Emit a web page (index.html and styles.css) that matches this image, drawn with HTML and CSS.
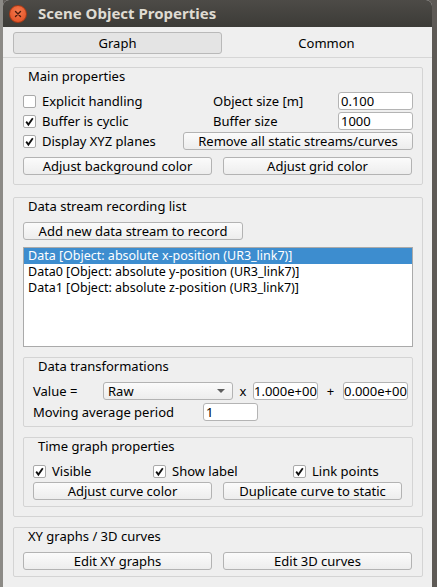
FILE: index.html
```html
<!DOCTYPE html>
<html>
<head>
<meta charset="utf-8">
<link rel="stylesheet" href="styles.css">
</head>
<body>
<div class="window">
  <div class="titlebar">
    <span class="close"><svg width="8" height="8" viewBox="0 0 8 8"><path d="M1.5 1.5L6.5 6.5M6.5 1.5L1.5 6.5" stroke="#4a1a0c" stroke-width="1.4" stroke-linecap="round"/></svg></span>
    <span class="title">Scene Object Properties</span>
  </div>
  <div class="tabs">
    <div class="tab active">Graph</div>
    <div class="tab">Common</div>
  </div>
  <div class="pane">
    <div class="group main">
      <div class="gtitle">Main properties</div>
      <div class="row">
        <label class="check w190"><span class="box"></span>Explicit handling</label>
        <span class="lbl w125">Object size [m]</span>
        <span class="input w75">0.100</span>
      </div>
      <div class="row gap2">
        <label class="check w190"><span class="box on"><svg width="11" height="11" viewBox="0 0 11 11"><path d="M2.2 5.6L4.4 8.6L8.8 2.2" fill="none" stroke="#111" stroke-width="1.8"/></svg></span>Buffer is cyclic</label>
        <span class="lbl w125">Buffer size</span>
        <span class="input w75">1000</span>
      </div>
      <div class="row gap2">
        <label class="check w160"><span class="box on"><svg width="11" height="11" viewBox="0 0 11 11"><path d="M2.2 5.6L4.4 8.6L8.8 2.2" fill="none" stroke="#111" stroke-width="1.8"/></svg></span>Display XYZ planes</label>
        <span class="btn w230">Remove all static streams/curves</span>
      </div>
      <div class="row gap7 pair">
        <span class="btn w189">Adjust background color</span>
        <span class="btn w189">Adjust grid color</span>
      </div>
    </div>

    <div class="group data">
      <div class="gtitle">Data stream recording list</div>
      <div class="row">
        <span class="btn w220">Add new data stream to record</span>
      </div>
      <div class="list">
        <div class="item sel">Data [Object: absolute x-position (UR3_link7)]</div>
        <div class="item">Data0 [Object: absolute y-position (UR3_link7)]</div>
        <div class="item">Data1 [Object: absolute z-position (UR3_link7)]</div>
      </div>

      <div class="group inner">
        <div class="gtitle">Data transformations</div>
        <div class="row">
          <span class="lbl w70">Value =</span>
          <span class="combo w130">Raw<span class="arrow"></span></span>
          <span class="op w20">x</span>
          <span class="input tight w65">1.000e+00</span>
          <span class="op w25">+</span>
          <span class="input tight w65">0.000e+00</span>
        </div>
        <div class="row gap3">
          <span class="lbl w170">Moving average period</span>
          <span class="input w55">1</span>
        </div>
      </div>

      <div class="group inner">
        <div class="gtitle">Time graph properties</div>
        <div class="row">
          <label class="check w120"><span class="box on"><svg width="11" height="11" viewBox="0 0 11 11"><path d="M2.2 5.6L4.4 8.6L8.8 2.2" fill="none" stroke="#111" stroke-width="1.8"/></svg></span>Visible</label>
          <label class="check w140"><span class="box on"><svg width="11" height="11" viewBox="0 0 11 11"><path d="M2.2 5.6L4.4 8.6L8.8 2.2" fill="none" stroke="#111" stroke-width="1.8"/></svg></span>Show label</label>
          <label class="check"><span class="box on"><svg width="11" height="11" viewBox="0 0 11 11"><path d="M2.2 5.6L4.4 8.6L8.8 2.2" fill="none" stroke="#111" stroke-width="1.8"/></svg></span>Link points</label>
        </div>
        <div class="row gap2 pair">
          <span class="btn w179">Adjust curve color</span>
          <span class="btn w179">Duplicate curve to static</span>
        </div>
      </div>
    </div>

    <div class="group xy">
      <div class="gtitle">XY graphs / 3D curves</div>
      <div class="row pair">
        <span class="btn w189">Edit XY graphs</span>
        <span class="btn w189">Edit 3D curves</span>
      </div>
    </div>
  </div>
</div>
</body>
</html>
```

FILE: styles.css
```css
* { box-sizing: border-box; }
html, body { margin: 0; height: 100%; }
body {
  background: linear-gradient(90deg, #8c8a86 0, #8c8a86 3px, #5e5a56 3px);
  font-family: "Noto Sans", "DejaVu Sans", sans-serif;
  font-size: 13px;
  color: #000;
  overflow: hidden;
}
.window {
  margin-left: 3px;
  width: 429px;
  height: 587px;
  background: #efefef;
  border-radius: 6px 6px 0 0;
  overflow: hidden;
}
.titlebar {
  height: 27px;
  background: linear-gradient(#4d4b47, #3c3b37);
  display: flex;
  align-items: center;
  padding-left: 6px;
  gap: 11px;
}
.close {
  width: 18px;
  height: 18px;
  border-radius: 50%;
  background: radial-gradient(circle at 50% 35%, #f57a4e, #de4a1e);
  border: 1px solid #a63a17;
  display: flex;
  align-items: center;
  justify-content: center;
}
.title {
  color: #dfdbd2;
  font-weight: bold;
  font-size: 15px;
  line-height: 27px;
}
.tabs {
  display: flex;
  margin: 5px 0 0 10px;
  height: 22px;
}
.tab {
  width: 209px;
  display: flex;
  align-items: center;
  justify-content: center;
}
.tab.active {
  background: #e4e4e4;
  border: 1px solid #b9b9b9;
  border-radius: 3px;
}
.pane {
  margin-top: 3px;
  border-top: 1px solid #d6d6d6;
  padding: 9px 9px 0 10px;
}
.group {
  border: 1px solid #d4d4d4;
  border-radius: 2px;
  padding: 0 9px 9px 9px;
}
.gtitle {
  height: 24px;
  line-height: 16px;
  padding-left: 5px;
}
.row {
  display: flex;
  align-items: center;
  height: 18px;
}
.row > * { flex: none; }
.gap2 { margin-top: 2px; }
.gap3 { margin-top: 3px; }
.gap7 { margin-top: 7px; }
.pair { gap: 11px; }
.check {
  display: flex;
  align-items: center;
  gap: 6px;
  white-space: nowrap;
}
.box {
  width: 13px;
  height: 13px;
  flex: none;
  background: #fff;
  border: 1px solid #a9a9a9;
  border-radius: 2px;
  display: flex;
  align-items: center;
  justify-content: center;
}
.lbl { white-space: nowrap; }
.input {
  height: 18px;
  background: #fff;
  border: 1px solid #b4b4b4;
  border-radius: 3px;
  padding-left: 2px;
  line-height: 16px;
  white-space: nowrap;
  overflow: hidden;
}
.input.tight { padding-left: 0; }
.btn {
  height: 18px;
  background: linear-gradient(#fbfbfb, #ededed);
  border: 1px solid #b3b3b3;
  border-radius: 3px;
  display: flex;
  align-items: center;
  justify-content: center;
  white-space: nowrap;
}
.combo {
  height: 18px;
  background: linear-gradient(#fbfbfb, #ededed);
  border: 1px solid #b3b3b3;
  border-radius: 3px;
  display: flex;
  align-items: center;
  justify-content: space-between;
  padding: 0 7px 0 4px;
}
.arrow {
  width: 0;
  height: 0;
  border-left: 4px solid transparent;
  border-right: 4px solid transparent;
  border-top: 4px solid #5e5e5e;
}
.op { text-align: center; }
.w20 { width: 20px; }
.w25 { width: 25px; }
.w55 { width: 55px; }
.w65 { width: 65px; }
.w70 { width: 70px; }
.w75 { width: 75px; }
.w120 { width: 120px; }
.w125 { width: 125px; }
.w130 { width: 130px; }
.w140 { width: 140px; }
.w160 { width: 160px; }
.w170 { width: 170px; }
.w179 { width: 179px; }
.w189 { width: 189px; }
.w190 { width: 190px; }
.w220 { width: 220px; }
.w230 { width: 230px; }
.main { width: 410px; }
.data { width: 410px; margin-top: 12px; }
.xy { width: 410px; margin-top: 10px; padding-bottom: 6px; }
.list {
  margin-top: 7px;
  height: 100px;
  background: #fff;
  border: 1px solid #aaaaaa;
  padding: 0;
}
.item {
  height: 16px;
  line-height: 16px;
  padding-left: 4px;
  font-size: 12.5px;
  white-space: nowrap;
}
.item.sel {
  background: #3d8dcf;
  color: #fff;
}
.inner {
  width: 390px;
  margin-top: 10px;
  height: 70px;
  padding: 0 3px 0 9px;
}
```
